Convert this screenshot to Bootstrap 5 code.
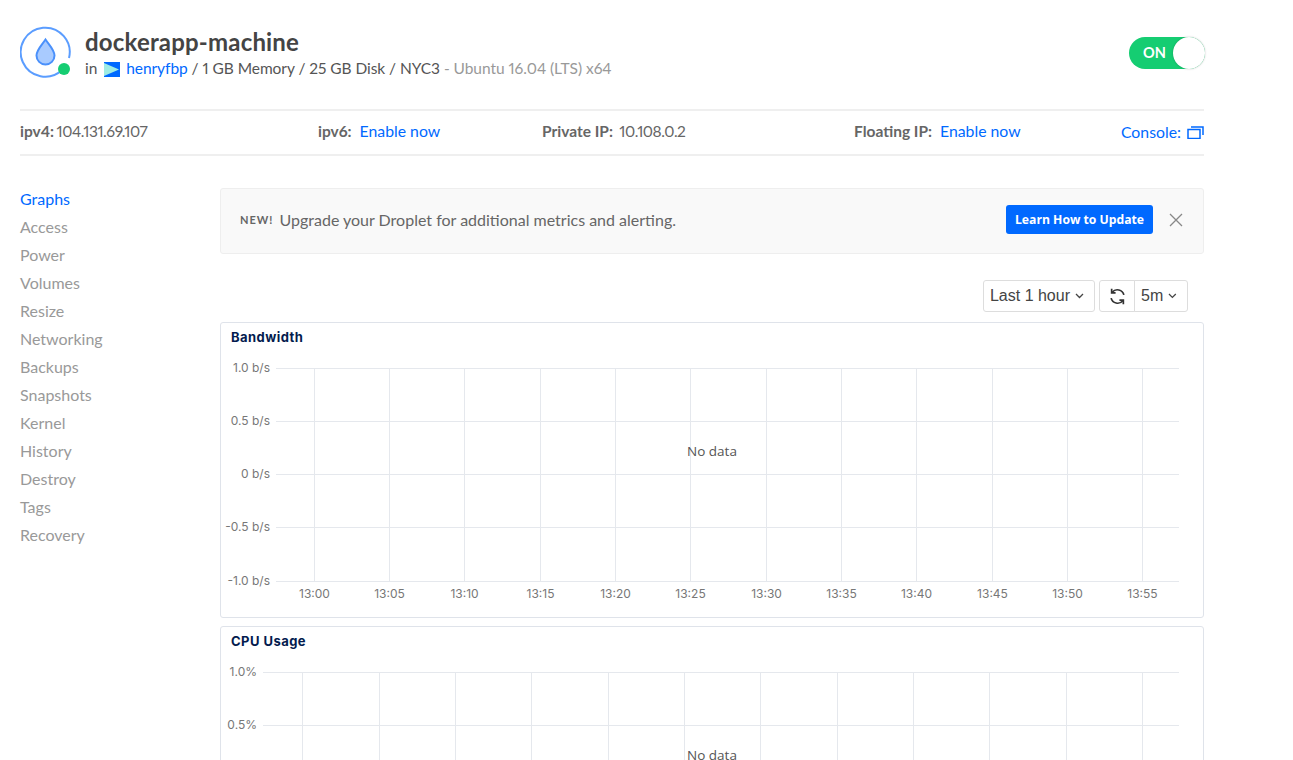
<!DOCTYPE html>
<html lang="en">
<head>
    <meta charset="UTF-8">
    <meta name="viewport" content="width=device-width, initial-scale=1">
    <title>dockerapp-machine</title>
    <link href="https://cdn.jsdelivr.net/npm/bootstrap@5.3.0/dist/css/bootstrap.min.css" rel="stylesheet">
    <style>
        body { font-family: Lato, "Open Sans", sans-serif; color: #666; font-size: 16px; background: #fff; overflow: hidden; height: 760px; font-variant-numeric: proportional-nums; }
        a { color: #0069ff; text-decoration: none; }
        .page-wrap { width: 1184px; margin-left: 20px; }
        .droplet-head { height: 109px; padding-top: 26px; }
        .droplet-logo { width: 52px; height: 52px; margin-right: 13px; flex: none; }
        .droplet-name { font-size: 24px; font-weight: 700; color: #444; line-height: 31px; margin: 0; letter-spacing: .18px; }
        .droplet-meta { font-size: 15.5px; line-height: 22px; color: #555; letter-spacing: -.05px; }
        .droplet-meta .os-info { color: #999; }
        .team-flag { width: 16px; height: 15px; margin: 0 6px 0 3px; vertical-align: -3px; }
        .power-toggle { width: 76px; height: 32px; border-radius: 16px; background: #15cd72; margin: 11px -1px 0 0; color: #fff; font-weight: 700; font-size: 14.5px; line-height: 32px; padding-left: 14px; position: relative; }
        .power-knob { position: absolute; right: 0; top: 0; width: 32px; height: 32px; border-radius: 50%; background: #fff; box-shadow: 0 0 2px rgba(0,0,0,.25); }
        .ip-row { height: 47px; border-top: 2px solid #efefef; border-bottom: 2px solid #efefef; display: grid; grid-template-columns: 298px 224px 312px 1fr auto; align-items: center; font-size: 15.5px; padding-bottom: 2px; }
        .ip-row b { font-weight: 700; color: #666; margin-right: 4px; }
        .ip-row a { font-size: 15.8px; }
        .ip-num { letter-spacing: -.45px; margin-left: -1.5px; }
        .console-icon { width: 17px; height: 13px; margin-left: 2px; vertical-align: -1px; }
        .side-menu { width: 200px; flex: none; padding-top: 29px; }
        .side-menu a { display: block; line-height: 28px; color: #999; font-size: 16px; }
        .side-menu a.active-item { color: #0069ff; }
        .main-col { width: 984px; padding-top: 32px; }
        .promo-box { height: 66px; background: #f9f9f9; border: 1px solid #eee; border-radius: 3px; padding: 0 20px 2px 19px; color: #666; }
        .promo-new { font-size: 11px; font-weight: 700; letter-spacing: 1px; margin-right: 6px; color: #666; }
        .promo-btn { background: #0069ff; color: #fff; font-family: "Open Sans", sans-serif; font-size: 12.2px; font-weight: 700; border: 0; border-radius: 3px; height: 29px; width: 147px; padding: 1px 0 0; margin-top: -1px; }
        .promo-close { width: 14px; height: 14px; margin-left: 16px; }
        .range-row { height: 68px; padding: 26px 16px 0 0; font-family: "Liberation Sans", Arial, sans-serif; color: #444; }
        .range-box { height: 32px; border: 1px solid #ddd; border-radius: 3px; background: #fff; display: flex; align-items: center; padding: 0 10px 0 6px; font-size: 16px; }
        .range-box svg.caret-ic { width: 9px; height: 6px; margin-left: 5px; }
        .range-refresh { width: 36px; justify-content: center; margin-left: 4px; border-radius: 3px 0 0 3px; padding: 0; }
        .range-step { width: 54px; margin-left: -1px; border-radius: 0 3px 3px 0; }
        .chart-box { border: 1px solid #dfe3ea; border-radius: 3px; margin-bottom: 8px; height: 296px; display: block; }
        .chart-box svg { display: block; width: 982px; height: 294px; }
        .chart-box text { font-family: Inter, sans-serif; font-size: 12px; fill: #777; }
        .chart-box text.chart-title { font-size: 13px; font-weight: 700; fill: #031b4e; letter-spacing: .45px; }
        .chart-box text.no-data { font-size: 13.5px; fill: #555; font-family: "Open Sans", sans-serif; }
        .chart-box line { stroke: #e5e8ed; stroke-width: 1; }
    </style>
</head>
<body>
<div class="page-wrap">
    <!-- Header -->
    <div class="droplet-head d-flex justify-content-between align-items-start">
        <div class="d-flex">
            <svg class="droplet-logo" viewBox="0 0 52 52">
                <path d="M42 44 A24.5 24.5 0 1 1 49 32" fill="none" stroke="#5b9dff" stroke-width="2"/>
                <path d="M25.500 13.500 C21 20 16.500 24 16.500 29.500 A9 9 0 0 0 34.500 29.500 C34.500 24 30 20 25.500 13.500 Z" fill="#a9cbff" stroke="#4a90fb" stroke-width="2"/>
                <circle cx="44" cy="43" r="6" fill="#15cd72"/>
            </svg>
            <div>
                <h1 class="droplet-name">dockerapp-machine</h1>
                <div class="droplet-meta">in <svg class="team-flag" viewBox="0 0 16 15"><rect width="16" height="15" fill="#0069ff"/><path d="M0 1 L15 7.500 L0 14 Z" fill="#9fece4"/></svg><a href="#">henryfbp</a> / 1 GB Memory / 25 GB Disk / NYC3 <span class="os-info">- Ubuntu 16.04 (LTS) x64</span></div>
            </div>
        </div>
        <div class="power-toggle">ON<span class="power-knob"></span></div>
    </div>

    <!-- IP row -->
    <div class="ip-row">
        <div><b>ipv4:</b><span class="ip-num">104.131.69.107</span></div>
        <div><b>ipv6:</b> <a href="#">Enable now</a></div>
        <div><b>Private IP:</b> <span class="ip-num">10.108.0.2</span></div>
        <div><b>Floating IP:</b> <a href="#">Enable now</a></div>
        <a href="#">Console: <svg class="console-icon" viewBox="0 0 17 13" fill="none" stroke="#0069ff" stroke-width="1.500"><rect x="1" y="3.500" width="12" height="9"/><path d="M4 1 H16 V9"/></svg></a>
    </div>

    <div class="d-flex">
        <!-- Sidebar -->
        <nav class="side-menu">
            <a class="active-item" href="#">Graphs</a>
            <a href="#">Access</a>
            <a href="#">Power</a>
            <a href="#">Volumes</a>
            <a href="#">Resize</a>
            <a href="#">Networking</a>
            <a href="#">Backups</a>
            <a href="#">Snapshots</a>
            <a href="#">Kernel</a>
            <a href="#">History</a>
            <a href="#">Destroy</a>
            <a href="#">Tags</a>
            <a href="#">Recovery</a>
        </nav>

        <div class="main-col">
            <div class="promo-box d-flex align-items-center">
                <span class="promo-new">NEW!</span>
                <span>Upgrade your Droplet for additional metrics and alerting.</span>
                <button class="promo-btn ms-auto" type="button">Learn How to Update</button>
                <svg class="promo-close" viewBox="0 0 14 14" stroke="#888" stroke-width="1.300"><path d="M1 1 L13 13 M13 1 L1 13"/></svg>
            </div>

            <div class="range-row d-flex justify-content-end">
                <div class="range-box">Last 1 hour<svg class="caret-ic" viewBox="0 0 9 6" fill="none" stroke="#444" stroke-width="1.300"><path d="M1 1 L4.500 4.500 L8 1"/></svg></div>
                <div class="range-box range-refresh">
                    <svg width="17" height="17" viewBox="0 0 16 16" fill="none" stroke="#333" stroke-width="1.600"><path d="M14 6.500 A6.300 6.300 0 0 0 3 4"/><path d="M2 9.500 A6.300 6.300 0 0 0 13 12"/><path d="M2.500 .8 V4.500 H6.200"/><path d="M13.500 15.200 V11.500 H9.800"/></svg>
                </div>
                <div class="range-box range-step">5m<svg class="caret-ic" viewBox="0 0 9 6" fill="none" stroke="#444" stroke-width="1.300"><path d="M1 1 L4.500 4.500 L8 1"/></svg></div>
            </div>

            <div class="chart-box" id="chartBandwidth"></div>
            <div class="chart-box" id="chartCpu"></div>
        </div>
    </div>
</div>

<script>
    // coordinates are relative to the inside of each chart box
    const times = ['13:00','13:05','13:10','13:15','13:20','13:25','13:30','13:35','13:40','13:45','13:50','13:55'];

    function drawChart(id, title, yLabels, xStart, xs) {
        const gridYs = [45, 98, 151, 204, 258];
        let out = `<text class="chart-title" x="10" y="19">${title}</text>`;
        yLabels.forEach((label, i) => {
            out += `<line x1="${xStart}" x2="958" y1="${gridYs[i] + .5}" y2="${gridYs[i] + .5}"/>`;
            out += `<text x="${xStart - 6}" y="${gridYs[i] + 4}" text-anchor="end">${label}</text>`;
        });
        xs.forEach((x, i) => {
            out += `<line x1="${x + .5}" x2="${x + .5}" y1="45" y2="258"/>`;
            out += `<text x="${x + .5}" y="275" text-anchor="middle">${times[i]}</text>`;
        });
        out += `<text class="no-data" x="491" y="133" text-anchor="middle">No data</text>`;
        document.getElementById(id).innerHTML = `<svg viewBox="0 0 982 294">${out}</svg>`;
    }

    drawChart('chartBandwidth', 'Bandwidth', ['1.0 b/s','0.5 b/s','0 b/s','-0.5 b/s','-1.0 b/s'], 55,
        [93,168,243,319,394,469,545,620,695,771,846,921]);
    drawChart('chartCpu', 'CPU Usage', ['1.0%','0.5%','0%','-0.5%','-1.0%'], 42,
        [81,158,234,310,387,463,539,616,692,768,845,921]);
</script>
<script src="https://cdn.jsdelivr.net/npm/bootstrap@5.3.0/dist/js/bootstrap.bundle.min.js"></script>
</body>
</html>
